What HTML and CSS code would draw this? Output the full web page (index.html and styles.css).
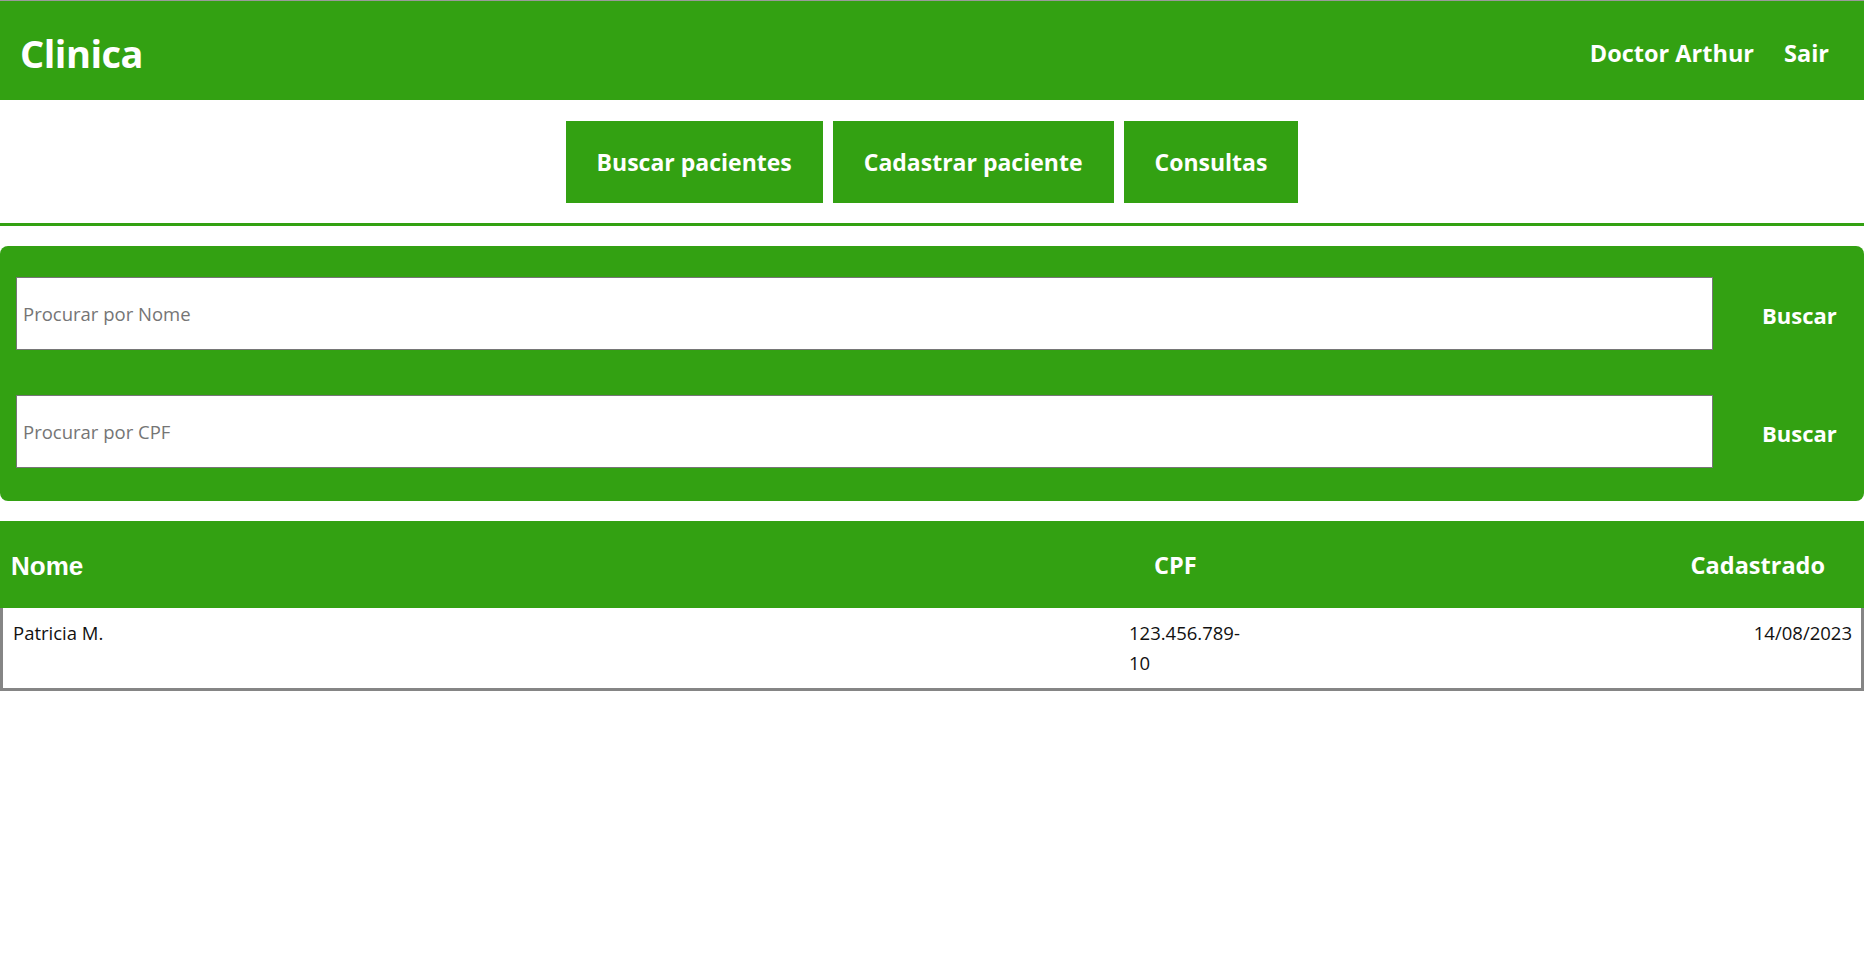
FILE: index.html
```html
<!DOCTYPE html>
<html lang="pt-BR">
<head>
<meta charset="utf-8">
<title>Clinica</title>
<link rel="stylesheet" href="styles.css">
</head>
<body>
<header class="topbar">
  <div class="brand">Clinica</div>
  <div class="user-area">
    <span class="user-name">Doctor Arthur</span>
    <span class="logout">Sair</span>
  </div>
</header>
<nav class="menu">
  <a class="menu-btn">Buscar pacientes</a>
  <a class="menu-btn">Cadastrar paciente</a>
  <a class="menu-btn">Consultas</a>
</nav>
<section class="search-panel">
  <div class="search-row">
    <input class="search-input" type="text" placeholder="Procurar por Nome">
    <button class="search-btn">Buscar</button>
  </div>
  <div class="search-row">
    <input class="search-input" type="text" placeholder="Procurar por CPF">
    <button class="search-btn">Buscar</button>
  </div>
</section>
<section class="patients">
  <div class="patients-head">
    <div class="head-nome">Nome</div>
    <div class="head-cpf">CPF</div>
    <div class="head-data">Cadastrado</div>
  </div>
  <div class="patients-row">
    <div class="cell-nome">Patricia M.</div>
    <div class="cell-cpf">123.456.789-10</div>
    <div class="cell-data">14/08/2023</div>
  </div>
</section>
</body>
</html>
```

FILE: styles.css
```css
* { box-sizing: border-box; }
html, body { margin: 0; padding: 0; background: #fff; }
body {
  font-family: "Open Sans", "Noto Sans", sans-serif;
  color: #111;
}
.topbar {
  height: 100px;
  border-top: 1px solid #9a9a9a;
  background: #33a112;
  color: #fff;
  display: flex;
  align-items: center;
  justify-content: space-between;
  padding: 0 35px 0 20px;
}
.brand {
  font-size: 38px;
  font-weight: 700;
  letter-spacing: -0.5px;
  margin-top: 4px;
}
.user-area {
  display: flex;
  gap: 30px;
  font-size: 23.5px;
  font-weight: 700;
  margin-top: 4px;
}
.menu {
  display: flex;
  justify-content: center;
  gap: 10px;
  padding: 21px 0 20px 0;
  border-bottom: 3px solid #33a112;
}
.menu-btn {
  height: 82px;
  background: #33a112;
  color: #fff;
  display: flex;
  align-items: center;
  justify-content: center;
  padding: 0 31px 0 31px;
  white-space: nowrap;
  font-size: 23px;
  font-weight: 700;
}
.search-panel {
  margin-top: 20px;
  background: #33a112;
  border-radius: 8px;
  padding: 31px 0 33px 16px;
  display: flex;
  flex-direction: column;
  gap: 45px;
}
.search-row {
  display: flex;
  align-items: center;
}
.search-input {
  flex: 1;
  height: 73px;
  border: 1px solid #767676;
  background: #fff;
  padding: 0 6px;
  font-family: "Open Sans", "Noto Sans", sans-serif;
  font-size: 18.5px;
  color: #222;
  outline: none;
}
.search-input::placeholder { color: #757575; }
.search-btn {
  background: transparent;
  border: 0;
  color: #fff;
  font-family: "Open Sans", "Noto Sans", sans-serif;
  font-size: 22px;
  font-weight: 700;
  padding: 0 27px 0 49px;
  width: 151px;
  text-align: left;
  margin-top: 2px;
}
.patients {
  margin-top: 20px;
}
.patients-head {
  height: 87px;
  background: #33a112;
  color: #fff;
  display: grid;
  grid-template-columns: 1143px 1fr auto;
  align-items: center;
  padding: 0 39px 0 11px;
  font-size: 23.5px;
  font-weight: 700;
}
.head-nome {
  font-family: "Liberation Sans", Arial, sans-serif;
  font-size: 26px;
  margin-top: 3px;
}
.patients-row {
  height: 83px;
  border: 3px solid #858585;
  border-top: 0;
  display: grid;
  grid-template-columns: 1116px 122px 1fr;
  padding: 10px 9px 0 10px;
  font-size: 18.5px;
  line-height: 30px;
  color: #111;
}
.cell-data { text-align: right; }
```
